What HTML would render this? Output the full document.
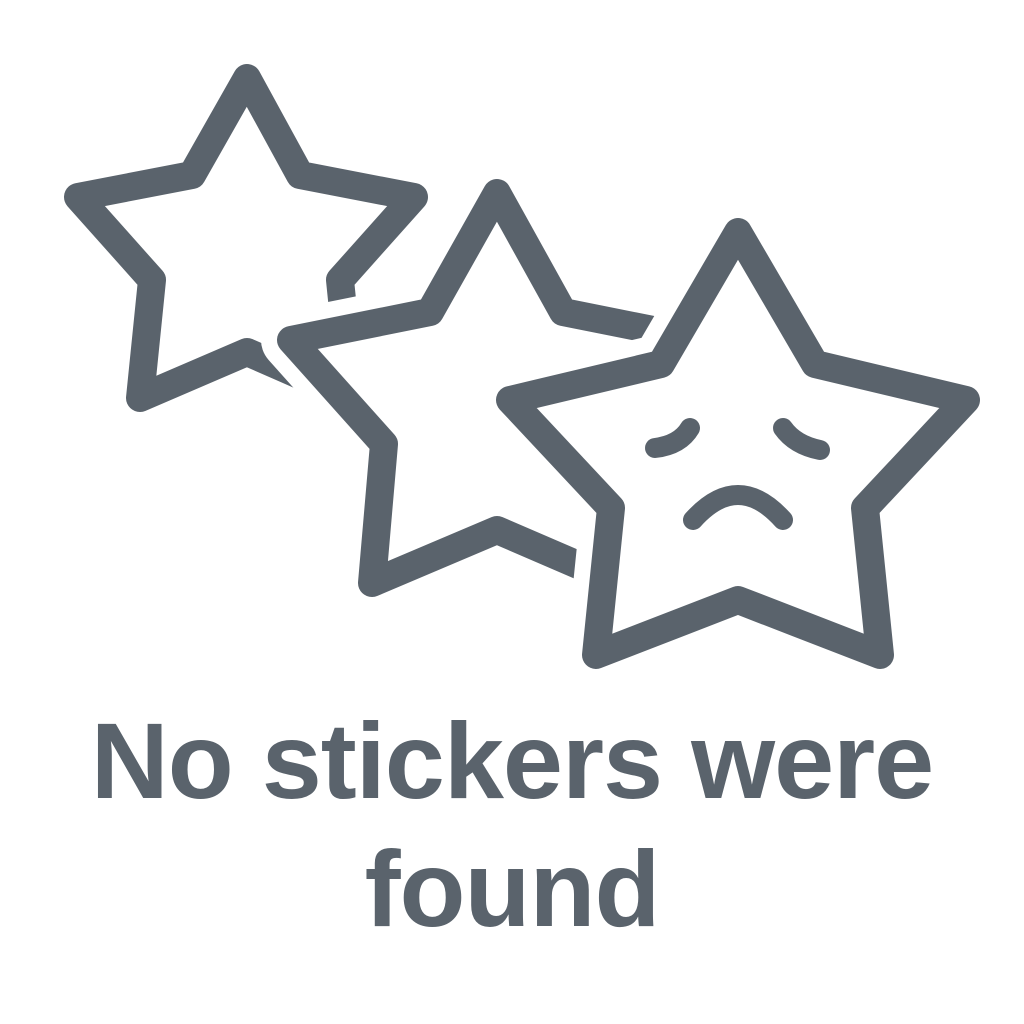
<!DOCTYPE html>
<html><head><meta charset="utf-8"><style>
html,body{margin:0;padding:0;background:#fff;width:1024px;height:1024px;overflow:hidden}
svg{position:absolute;left:0;top:0}
.t{position:absolute;left:0;width:1024px;text-align:center;font-family:"Liberation Sans",sans-serif;font-weight:bold;font-size:108px;color:#5a636c;line-height:128px;top:697px;letter-spacing:-1px}
</style></head><body>
<svg width="1024" height="1024" viewBox="0 0 1024 1024">
<g fill="#fff" stroke-linejoin="round" stroke-linecap="round">
<path d="M247,78 L300,175 L414,197 L340,280 L352,398 L247,352 L140,398 L152,280 L78,197 L192,175 Z" stroke="#5a636c" stroke-width="28"/>
<path d="M497,193 L563,312 L703,340 L610,444 L620,583 L497,530 L372,583 L384,444 L291,340 L430,312 Z" stroke="#fff" stroke-width="60"/>
<path d="M497,193 L563,312 L703,340 L610,444 L620,583 L497,530 L372,583 L384,444 L291,340 L430,312 Z" stroke="#5a636c" stroke-width="28"/>
<path d="M738,232 L815,364 L966,400 L865,508 L880,655 L738,600 L596,655 L611,508 L510,400 L661,364 Z" stroke="#fff" stroke-width="60"/>
<path d="M738,232 L815,364 L966,400 L865,508 L880,655 L738,600 L596,655 L611,508 L510,400 L661,364 Z" stroke="#5a636c" stroke-width="28"/>
</g>
<g fill="none" stroke="#5a636c" stroke-width="20" stroke-linecap="round">
<path d="M655,448 Q680,445 690,428"/>
<path d="M783,428 Q795,445 820,450"/>
<path d="M693,520 Q738,470 783,520"/>
</g>
</svg>
<div class="t">No stickers were<br>found</div>
</body></html>
